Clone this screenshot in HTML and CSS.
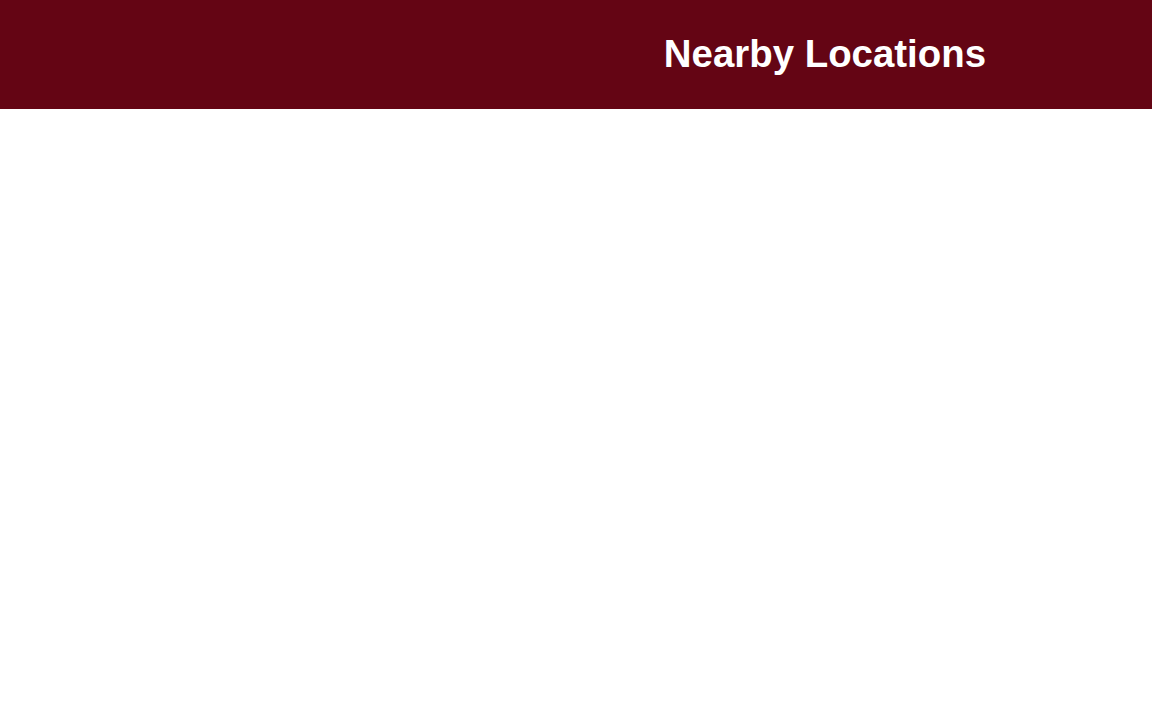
FILE: index.html
```html
<!DOCTYPE html>
<html lang="en">
<head>
<meta charset="utf-8">
<title>Nearby Locations</title>
<link rel="stylesheet" href="styles.css">
</head>
<body>
<header class="top-bar">
  <h1 class="title">Nearby Locations</h1>
</header>
<main class="content"></main>
</body>
</html>
```
FILE: styles.css
```css
html, body {
  margin: 0;
  padding: 0;
  background: #ffffff;
  font-family: "Liberation Sans", Arial, sans-serif;
}
.top-bar {
  box-sizing: border-box;
  height: 108.5px;
  background: #640514;
  display: flex;
  justify-content: flex-end;
  align-items: flex-start;
  padding: 32px 166px 0 0;
}
.title {
  margin: 0;
  color: #ffffff;
  font-size: 38.4px;
  font-weight: bold;
  line-height: normal;
}
.content {
  min-height: 611px;
}
```
